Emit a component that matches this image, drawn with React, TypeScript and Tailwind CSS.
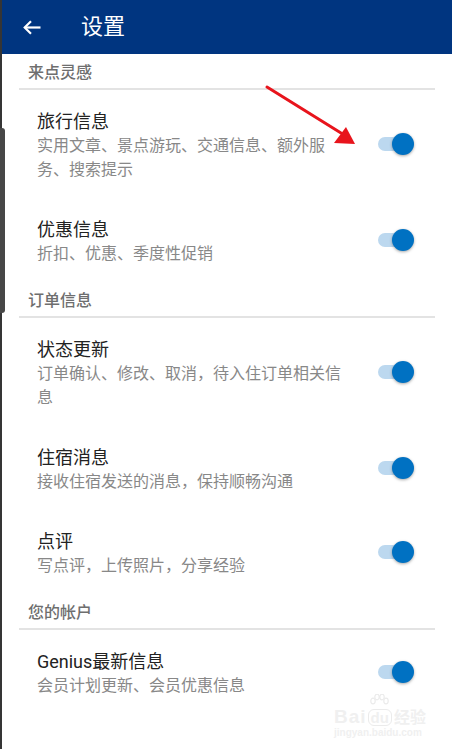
import React from "react";

type Item = { title: string; desc: string };
type Section = { name: string; items: Item[] };

const sections: Section[] = [
  {
    name: "来点灵感",
    items: [
      { title: "旅行信息", desc: "实用文章、景点游玩、交通信息、额外服务、搜索提示" },
      { title: "优惠信息", desc: "折扣、优惠、季度性促销" },
    ],
  },
  {
    name: "订单信息",
    items: [
      { title: "状态更新", desc: "订单确认、修改、取消，待入住订单相关信息" },
      { title: "住宿消息", desc: "接收住宿发送的消息，保持顺畅沟通" },
      { title: "点评", desc: "写点评，上传照片，分享经验" },
    ],
  },
  {
    name: "您的帐户",
    items: [{ title: "Genius最新信息", desc: "会员计划更新、会员优惠信息" }],
  },
];

const Toggle = () => (
  <div className="relative w-[36px] h-[22px] -mt-[4px] shrink-0">
    <div className="absolute left-0 top-[4px] w-[32px] h-[14px] rounded-full bg-[#bcd8ef]" />
    <div className="absolute right-0 top-0 w-[22px] h-[22px] rounded-full bg-[#0071c2] shadow-[0_1px_3px_rgba(0,0,0,0.35)]" />
  </div>
);

const Row = ({ item }: { item: Item }) => (
  <div className="flex items-center pl-[37px] pr-[38px] py-[18px]">
    <div className="w-[304px]">
      <div className="text-[18px] leading-[24px] text-[#222222]">{item.title}</div>
      <div className="text-[16px] leading-[24px] text-[#888888]">{item.desc}</div>
    </div>
    <div className="ml-auto">
      <Toggle />
    </div>
  </div>
);

export default function App() {
  return (
    <div
      className="relative w-[452px] h-[749px] overflow-hidden bg-white"
      style={{ fontFamily: 'Roboto, "Noto Sans CJK SC", sans-serif' }}
    >
      {/* top bar */}
      <div className="h-[54px] bg-[#003580] flex items-center">
        <svg className="ml-[23px]" width="18" height="15" viewBox="0 0 18 15" fill="none">
          <path d="M17.5 7.5H1.8" stroke="white" strokeWidth="2.2" />
          <path d="M8 1.2L1.7 7.5L8 13.8" stroke="white" strokeWidth="2.2" />
        </svg>
        <div className="ml-[40px] text-[22px] leading-none text-white">设置</div>
      </div>

      {/* list */}
      {sections.map((s, i) => (
        <div key={s.name}>
          <div
            className={`pl-[28px] ${i === 0 ? "pt-[7px]" : "pt-[5px]"} pb-[3px] text-[16px] leading-[24px] font-medium text-[#6e6e6e]`}
          >
            {s.name}
          </div>
          <div className="mx-[19px] w-[416px] h-[2px] bg-[#e3e3e3] mb-[2px]" />
          {s.items.map((it) => (
            <Row key={it.title} item={it} />
          ))}
        </div>
      ))}

      {/* screen edge / scroll handle */}
      <div className="absolute left-0 top-0 w-[2px] h-full bg-[#353535]" />
      <div className="absolute left-0 top-[128px] w-[5px] h-[185px] rounded-r-[3px] bg-[#474747]" />

      {/* red arrow annotation */}
      <svg className="absolute left-0 top-0 pointer-events-none" width="452" height="749">
        <line x1="267" y1="87" x2="341" y2="133" stroke="#e8141c" strokeWidth="3" strokeLinecap="round" />
        <polygon points="334,143 346,127 355,144" fill="#e8141c" />
      </svg>

      {/* watermark */}
      <div className="absolute left-[334px] top-[694px] text-[#f0f0f0]">
        <svg className="absolute left-[34px] top-[0px]" width="22" height="16" viewBox="0 0 22 16" fill="none" stroke="#ebebeb" strokeWidth="1.2">
          <ellipse cx="5" cy="7" rx="2.2" ry="2.8" />
          <ellipse cx="9" cy="3" rx="2.2" ry="2.8" />
          <ellipse cx="14" cy="3" rx="2.2" ry="2.8" />
          <ellipse cx="18" cy="7" rx="2.2" ry="2.8" />
        </svg>
        <div className="flex items-end mt-[13px] leading-none">
          <span className="text-[19px] font-bold tracking-[1px]" style={{ fontFamily: '"Liberation Sans", sans-serif' }}>
            Bai
          </span>
          <span className="ml-[1px] px-[2px] rounded-[6px] border border-[#ebebeb] text-[15px] font-bold" style={{ fontFamily: '"Liberation Sans", sans-serif' }}>
            du
          </span>
          <span className="ml-[2px] text-[16px] font-bold">经验</span>
        </div>
        <div className="mt-[2px] text-[10px] leading-none font-bold" style={{ fontFamily: '"Liberation Sans", sans-serif' }}>
          jingyan.baidu.com
        </div>
      </div>
    </div>
  );
}
